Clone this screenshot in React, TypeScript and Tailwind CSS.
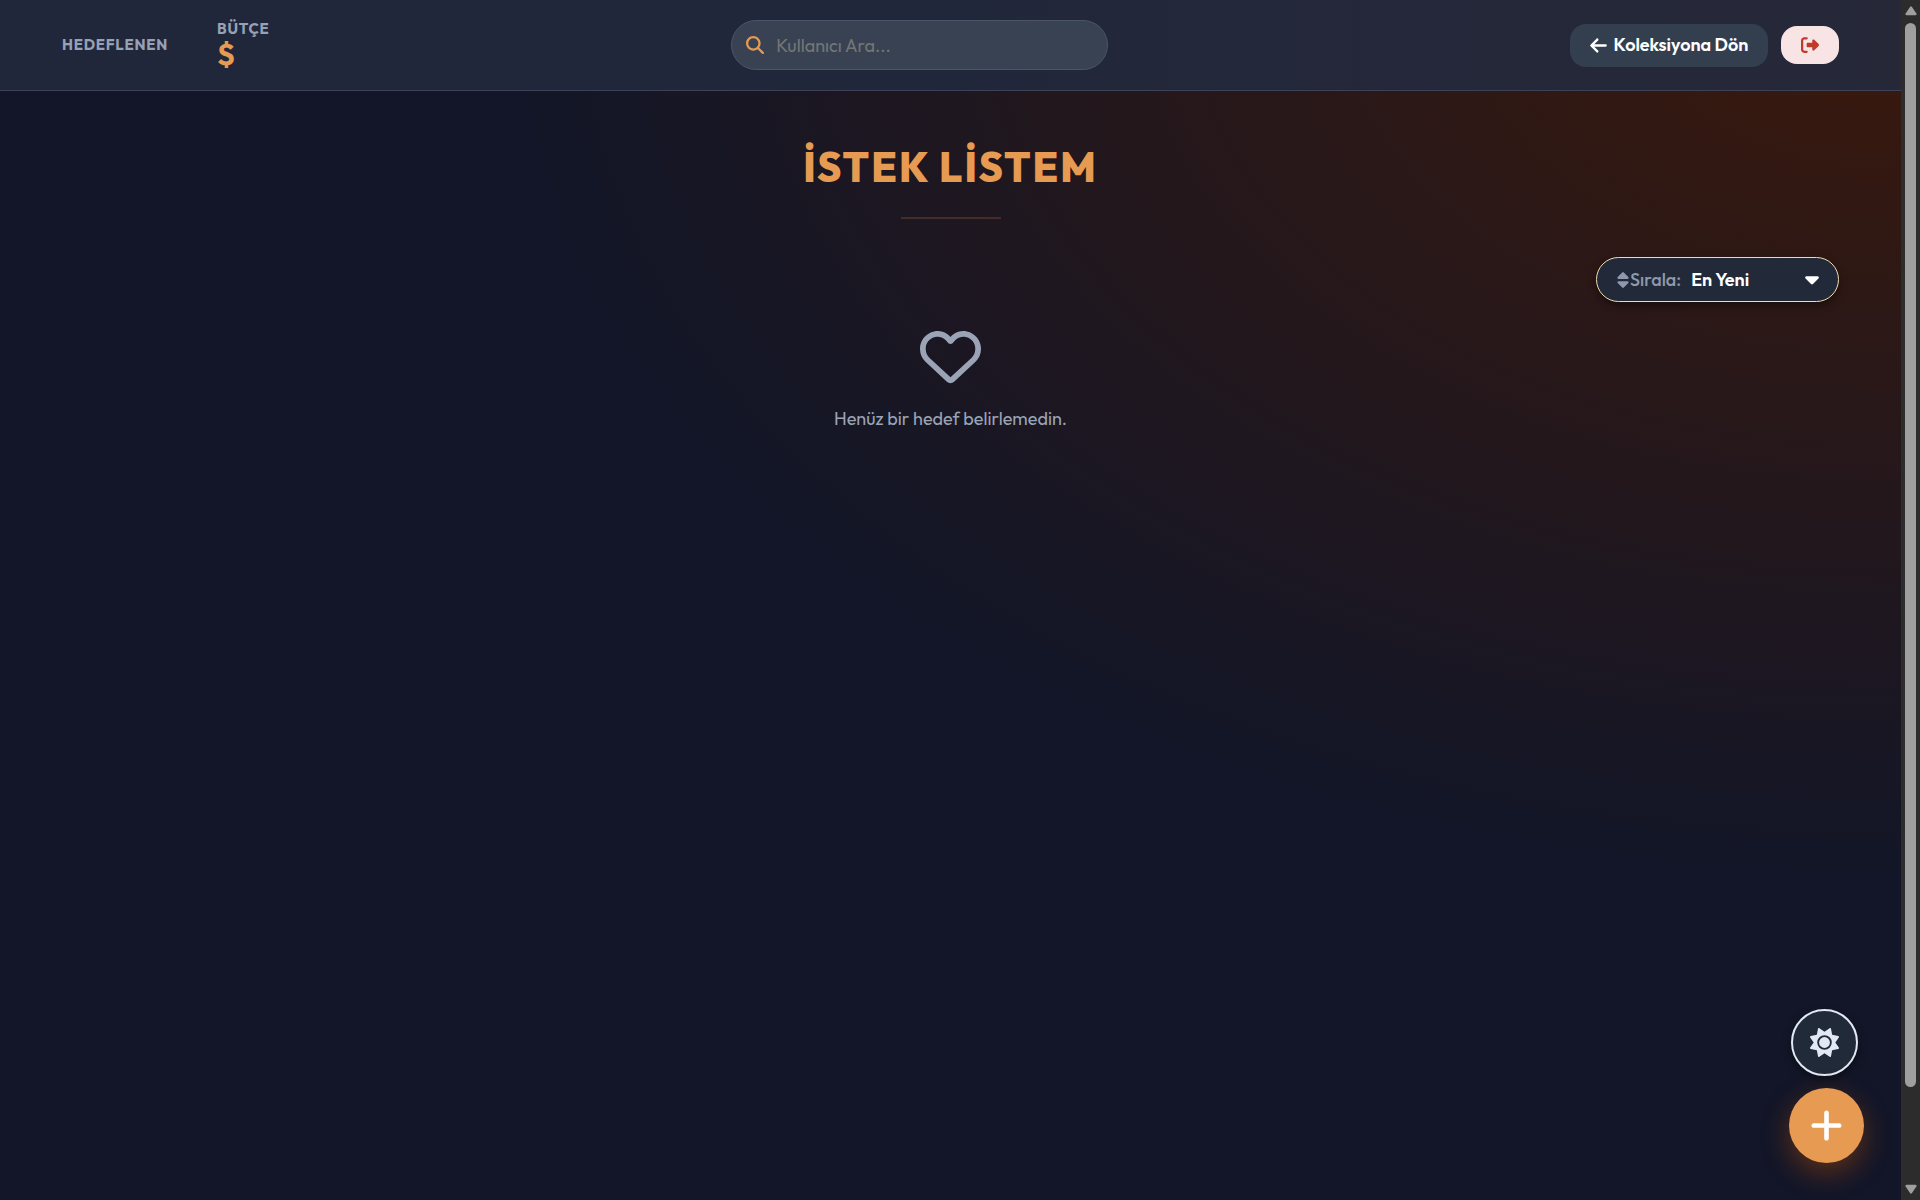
import { useState } from 'react'
import {
  FaArrowLeft,
  FaCaretDown,
  FaMagnifyingGlass,
  FaPlus,
  FaRegHeart,
  FaRightFromBracket,
  FaSort,
  FaSun,
} from 'react-icons/fa6'

const sortOptions = ['En Yeni', 'En Eski', 'Fiyat Artan', 'Fiyat Azalan']

function Header() {
  return (
    <header className="flex items-center justify-between border-b border-[#3c4358] bg-gradient-to-r from-[#21273a] via-[#21273a] to-[#262838] px-[62px] py-5">
      <div className="flex items-center gap-[49px] text-[15px] leading-[18px] font-bold tracking-wider text-[#97a1b5]">
        <span>HEDEFLENEN</span>
        <div className="flex flex-col">
          <span>BÜTÇE</span>
          <span className="text-3xl leading-8 tracking-normal text-[#e69a52]">$</span>
        </div>
      </div>

      <form role="search" className="relative w-[377px]" onSubmit={(e) => e.preventDefault()}>
        <FaMagnifyingGlass className="absolute top-4 left-[15px] h-[18px] w-[18px] text-[#e69a52]" />
        <input
          type="text"
          aria-label="Kullanıcı Ara"
          placeholder="Kullanıcı Ara..."
          className="block h-[50px] w-full rounded-full border border-[#4b5568] bg-[#384253] pr-5 pl-11 text-lg text-white outline-none placeholder:text-[#757575]"
        />
      </form>

      <div className="flex items-center gap-[13px]">
        <a href="#koleksiyon" className="flex h-[43px] w-[198px] items-center justify-center gap-[7px] rounded-2xl bg-[#333f4f] text-lg font-semibold whitespace-nowrap text-white">
          <FaArrowLeft className="h-[19px] w-[17px]" />
          Koleksiyona Dön
        </a>
        <button type="button" aria-label="Çıkış" className="grid h-[38px] w-[58px] place-items-center rounded-2xl bg-[#f9e4e5] text-[#c0392b]">
          <FaRightFromBracket className="h-[18px] w-[18px]" />
        </button>
      </div>
    </header>
  )
}

function SortSelect() {
  const [sort, setSort] = useState(sortOptions[0])

  return (
    <div className="relative flex h-[45px] w-[243px] items-center rounded-full border border-[#f0dcb4] bg-[#222a39] pl-[19px] text-lg shadow-[0_4px_8px_rgba(0,0,0,0.4)]">
      <label htmlFor="sort" className="flex items-center font-medium text-[#8e99ae]">
        <FaSort className="h-[18px] w-[14px]" />
        Sırala:
      </label>
      <select
        id="sort"
        value={sort}
        onChange={(e) => setSort(e.target.value)}
        className="h-full flex-1 appearance-none rounded-full bg-transparent pl-[10px] font-semibold text-white outline-none"
      >
        {sortOptions.map((option) => (
          <option key={option} className="bg-[#222a39]">{option}</option>
        ))}
      </select>
      <FaCaretDown className="pointer-events-none absolute top-[10px] right-[18px] h-[22px] w-4 text-white" />
    </div>
  )
}

function Scrollbar() {
  return (
    <div aria-hidden="true" className="fixed inset-y-0 right-0 flex w-[19px] flex-col items-center bg-[#2c2c2c] py-[5px] text-[#9f9f9f]">
      <svg viewBox="0 0 12 10" className="h-[11px] w-3" fill="currentColor">
        <path d="M5 1.4Q6 .2 7 1.4L11.4 8Q12 9.6 10.6 9.8H1.4Q0 9.6.6 8Z" />
      </svg>
      <div className="mt-[7px] flex min-h-0 w-[11px] flex-1 flex-col">
        <div className="h-11/12 rounded-full bg-[#9f9f9f]" />
      </div>
      <svg viewBox="0 0 12 10" className="h-[11px] w-3 rotate-180" fill="currentColor">
        <path d="M5 1.4Q6 .2 7 1.4L11.4 8Q12 9.6 10.6 9.8H1.4Q0 9.6.6 8Z" />
      </svg>
    </div>
  )
}

export default function App() {
  return (
    <div className="min-h-screen bg-[#121628] pr-[19px] font-['Outfit','Lato',sans-serif]">
      <div className="min-h-screen bg-[radial-gradient(at_top_right,#3b190c_0%,transparent_52%)]">
        <Header />

        <main className="px-[62px] pt-12">
          <h1 className="text-center text-[41px] leading-[56px] font-extrabold tracking-wider text-[#e69a52]">İSTEK LİSTEM</h1>
          <div className="mx-auto mt-[22px] h-[2px] w-[100px] bg-[#442c2b]" />

          <div className="mt-[38px] flex justify-end">
            <SortSelect />
          </div>

          <div className="mt-6 flex flex-col items-center text-[#9aa4b6]">
            <FaRegHeart className="h-[61px] w-[61px]" />
            <p className="mt-[18px] text-lg leading-7">Henüz bir hedef belirlemedin.</p>
          </div>
        </main>
      </div>

      <div className="fixed right-[56px] bottom-[37px] flex flex-col items-end gap-3">
        <button type="button" aria-label="Tema" className="mr-[6px] grid h-[67px] w-[67px] place-items-center rounded-full border-2 border-[#e2e8f4] bg-[#212a39] text-[#e2e8f4] shadow-[0_4px_10px_rgba(0,0,0,0.4)]">
          <FaSun className="h-[29px] w-[29px]" />
        </button>
        <button type="button" aria-label="Hedef ekle" className="grid h-[75px] w-[75px] place-items-center rounded-full bg-[#e69a52] text-white shadow-[0_10px_28px_rgba(211,84,0,0.4)]">
          <FaPlus className="h-[37px] w-[33px]" />
        </button>
      </div>

      <Scrollbar />
    </div>
  )
}
